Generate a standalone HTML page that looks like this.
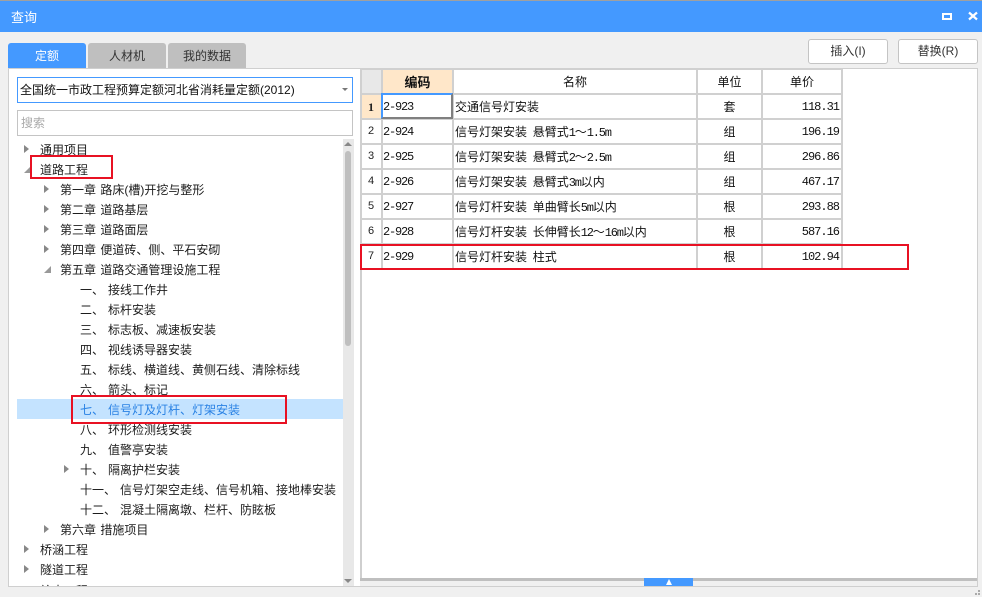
<!DOCTYPE html>
<html><head><meta charset="utf-8"><style>
html,body{margin:0;padding:0}
body{width:982px;height:597px;overflow:hidden;position:relative;background:#f0f0f0;font-family:"Liberation Sans","Noto Sans CJK SC",sans-serif;font-size:12px;color:#222}
div{position:absolute;box-sizing:border-box;white-space:nowrap}
.tab{top:43px;width:78px;height:25px;background:#bfbfbf;border-radius:3px 3px 0 0;text-align:center;line-height:26px;color:#333}
.btn{top:39px;width:80px;height:25px;background:#fff;border:1px solid #c4c4c4;border-radius:3px;text-align:center;line-height:23px;color:#333}
.t{line-height:20px;height:20px;color:#1c1c1c;margin-top:.5px;word-spacing:1px}
.ar{width:0;height:0;border-left:5px solid #888;border-top:4px solid transparent;border-bottom:4px solid transparent}
.ad{width:0;height:0;border-right:7px solid #999;border-top:7px solid transparent}
.hl{background:#c4e3ff;left:17px;top:399px;width:326px;height:20px}
.red{border:2px solid #e81123}
.vl{width:2px;background:#d0d0d0;top:69px;height:199px}
.hlne{height:2px;background:#d0d0d0;left:360px;width:482px}
.c{font-family:"Liberation Mono",monospace;font-size:12px;letter-spacing:-1.2px;line-height:27px;height:25px;color:#111}
.n{font-family:"WenQuanYi Zen Hei","Noto Sans CJK SC",sans-serif;font-size:12px;line-height:25px;height:25px;color:#111;left:455px;word-spacing:3px}
.n span{font-family:"Liberation Mono",monospace;font-size:12px;letter-spacing:-1.2px}
.u{font-family:"WenQuanYi Zen Hei","Noto Sans CJK SC",sans-serif;font-size:12px;line-height:25px;height:25px;left:698px;width:63px;text-align:center;color:#111}
.p{font-family:"Liberation Mono",monospace;font-size:12px;letter-spacing:-1px;line-height:27px;height:25px;left:762px;width:77px;text-align:right;color:#111}
.r{font-family:"Liberation Mono",monospace;font-size:11px;line-height:26px;height:25px;left:361px;width:20px;text-align:center;color:#222}
.h{font-family:"WenQuanYi Zen Hei","Noto Sans CJK SC",sans-serif;top:70px;height:23px;line-height:23px;text-align:center;color:#111}
</style></head><body>
<div style="left:0;top:0;width:982px;height:1px;background:#a0a0a0"></div>
<div style="left:0;top:1px;width:982px;height:31px;background:#4499ff"></div>
<div style="left:11px;top:8px;color:#fff;font-size:13px;line-height:20px">查询</div>
<div style="left:942px;top:13px;width:10px;height:7px;border:2px solid #fff"></div>
<svg style="position:absolute;left:967px;top:11px" width="12" height="10" viewBox="0 0 12 10"><path d="M2 1.5L10 8.5M10 1.5L2 8.5" stroke="#fff" stroke-width="2.2" fill="none"/></svg>

<div class="tab" style="left:8px;background:#4499ff;color:#fff">定额</div>
<div class="tab" style="left:88px">人材机</div>
<div class="tab" style="left:168px">我的数据</div>
<div class="btn" style="left:808px">插入(I)</div>
<div class="btn" style="left:898px">替换(R)</div>

<div style="left:8px;top:68px;width:352px;height:519px;background:#fff;border:1px solid #cfcfcf;border-right:none"></div>
<div style="left:17px;top:77px;width:336px;height:26px;background:#fff;border:1px solid #4499ff;line-height:24px;padding-left:2px;color:#111">全国统一市政工程预算定额河北省消耗量定额(2012)</div>
<div style="left:342px;top:88px;width:0;height:0;border-top:3px solid #777;border-left:3px solid transparent;border-right:3px solid transparent"></div>
<div style="left:17px;top:110px;width:336px;height:26px;background:#fff;border:1px solid #c4c4c4;line-height:24px;padding-left:3px;color:#aaa">搜索</div>

<div class="hl"></div>
<div style="left:343px;top:139px;width:11px;height:447px;background:#e8e8e8"></div>
<div style="left:345px;top:151px;width:6px;height:195px;background:#bfbfbf;border-radius:3px"></div>
<div style="left:344px;top:142px;width:0;height:0;border-bottom:4px solid #888;border-left:4px solid transparent;border-right:4px solid transparent"></div>
<div style="left:344px;top:579px;width:0;height:0;border-top:4px solid #888;border-left:4px solid transparent;border-right:4px solid transparent"></div>

<div class="ar" style="left:24px;top:145px"></div><div class="t" style="left:40px;top:139px">通用项目</div>
<div class="ad" style="left:24px;top:166px"></div><div class="t" style="left:40px;top:159px">道路工程</div>
<div class="ar" style="left:44px;top:185px"></div><div class="t" style="left:60px;top:179px">第一章 路床(槽)开挖与整形</div>
<div class="ar" style="left:44px;top:205px"></div><div class="t" style="left:60px;top:199px">第二章 道路基层</div>
<div class="ar" style="left:44px;top:225px"></div><div class="t" style="left:60px;top:219px">第三章 道路面层</div>
<div class="ar" style="left:44px;top:245px"></div><div class="t" style="left:60px;top:239px">第四章 便道砖、侧、平石安砌</div>
<div class="ad" style="left:44px;top:266px"></div><div class="t" style="left:60px;top:259px">第五章 道路交通管理设施工程</div>
<div class="t" style="left:80px;top:279px">一、</div><div class="t" style="left:108px;top:279px">接线工作井</div>
<div class="t" style="left:80px;top:299px">二、</div><div class="t" style="left:108px;top:299px">标杆安装</div>
<div class="t" style="left:80px;top:319px">三、</div><div class="t" style="left:108px;top:319px">标志板、减速板安装</div>
<div class="t" style="left:80px;top:339px">四、</div><div class="t" style="left:108px;top:339px">视线诱导器安装</div>
<div class="t" style="left:80px;top:359px">五、</div><div class="t" style="left:108px;top:359px">标线、横道线、黄侧石线、清除标线</div>
<div class="t" style="left:80px;top:379px">六、</div><div class="t" style="left:108px;top:379px">箭头、标记</div>
<div class="t" style="left:80px;top:399px;color:#2a82e4">七、</div><div class="t" style="left:108px;top:399px;color:#2a82e4">信号灯及灯杆、灯架安装</div>
<div class="t" style="left:80px;top:419px">八、</div><div class="t" style="left:108px;top:419px">环形检测线安装</div>
<div class="t" style="left:80px;top:439px">九、</div><div class="t" style="left:108px;top:439px">值警亭安装</div>
<div class="ar" style="left:64px;top:465px"></div><div class="t" style="left:80px;top:459px">十、</div><div class="t" style="left:108px;top:459px">隔离护栏安装</div>
<div class="t" style="left:80px;top:479px">十一、</div><div class="t" style="left:120px;top:479px">信号灯架空走线、信号机箱、接地棒安装</div>
<div class="t" style="left:80px;top:499px">十二、</div><div class="t" style="left:120px;top:499px">混凝土隔离墩、栏杆、防眩板</div>
<div class="ar" style="left:44px;top:525px"></div><div class="t" style="left:60px;top:519px">第六章 措施项目</div>
<div class="ar" style="left:24px;top:545px"></div><div class="t" style="left:40px;top:539px">桥涵工程</div>
<div class="ar" style="left:24px;top:565px"></div><div class="t" style="left:40px;top:559px">隧道工程</div>
<div style="left:9px;top:582px;width:334px;height:4px;overflow:hidden"><div class="t" style="left:31px;top:-1px;margin-top:0">给水工程</div></div>

<div class="red" style="left:30px;top:155px;width:83px;height:24px"></div>
<div class="red" style="left:71px;top:395px;width:216px;height:29px"></div>

<!-- right panel -->
<div style="left:360px;top:68px;width:618px;height:519px;background:#fff;border:1px solid #cfcfcf;border-left:2px solid #cfcfcf"></div>
<div style="left:362px;top:70px;width:19px;height:23px;background:#e8e8e8"></div>
<div style="left:382px;top:70px;width:70px;height:23px;background:#ffe7c9"></div>
<div style="left:362px;top:95px;width:19px;height:23px;background:#ffe7c9"></div>

<div class="vl" style="left:360px"></div><div class="vl" style="left:381px"></div><div class="vl" style="left:452px"></div><div class="vl" style="left:696px"></div><div class="vl" style="left:761px"></div><div class="vl" style="left:841px"></div>
<div class="hlne" style="top:68px"></div><div class="hlne" style="top:93px"></div><div class="hlne" style="top:118px"></div><div class="hlne" style="top:143px"></div><div class="hlne" style="top:168px"></div><div class="hlne" style="top:193px"></div><div class="hlne" style="top:218px"></div><div class="hlne" style="top:243px"></div>

<div style="left:381px;top:93px;width:72px;height:26px;border:2px solid #808080;border-top-color:#4499ff;border-left-color:#4499ff;background:#fff"></div>

<div class="h" style="left:383px;width:69px;font-weight:bold;font-size:13px">编码</div>
<div class="h" style="left:454px;width:242px">名称</div>
<div class="h" style="left:698px;width:63px">单位</div>
<div class="h" style="left:763px;width:78px">单价</div>

<div class="r" style="top:94px;font-weight:bold;font-family:'Liberation Serif',serif;font-size:12px">1</div><div class="c" style="left:383px;top:94px">2-923</div><div class="n" style="top:94px">交通信号灯安装</div><div class="u" style="top:94px">套</div><div class="p" style="top:94px">118.31</div>
<div class="r" style="top:119px">2</div><div class="c" style="left:383px;top:119px">2-924</div><div class="n" style="top:119px">信号灯架安装 悬臂式<span>1</span>～<span>1.5m</span></div><div class="u" style="top:119px">组</div><div class="p" style="top:119px">196.19</div>
<div class="r" style="top:144px">3</div><div class="c" style="left:383px;top:144px">2-925</div><div class="n" style="top:144px">信号灯架安装 悬臂式<span>2</span>～<span>2.5m</span></div><div class="u" style="top:144px">组</div><div class="p" style="top:144px">296.86</div>
<div class="r" style="top:169px">4</div><div class="c" style="left:383px;top:169px">2-926</div><div class="n" style="top:169px">信号灯架安装 悬臂式<span>3m</span>以内</div><div class="u" style="top:169px">组</div><div class="p" style="top:169px">467.17</div>
<div class="r" style="top:194px">5</div><div class="c" style="left:383px;top:194px">2-927</div><div class="n" style="top:194px">信号灯杆安装 单曲臂长<span>5m</span>以内</div><div class="u" style="top:194px">根</div><div class="p" style="top:194px">293.88</div>
<div class="r" style="top:219px">6</div><div class="c" style="left:383px;top:219px">2-928</div><div class="n" style="top:219px">信号灯杆安装 长伸臂长<span>12</span>～<span>16m</span>以内</div><div class="u" style="top:219px">根</div><div class="p" style="top:219px">587.16</div>
<div class="r" style="top:244px">7</div><div class="c" style="left:383px;top:244px">2-929</div><div class="n" style="top:244px">信号灯杆安装 柱式</div><div class="u" style="top:244px">根</div><div class="p" style="top:244px">102.94</div>

<div class="red" style="left:360px;top:244px;width:549px;height:26px"></div>

<div style="left:360px;top:581px;width:617px;height:5px;background:#f0f0f0"></div>
<div style="left:360px;top:578px;width:617px;height:3px;background:#bfbfbf"></div>
<div style="left:644px;top:578px;width:49px;height:8px;background:#4499ff"></div>
<div style="left:666px;top:579px;width:0;height:0;border-bottom:6px solid #fff;border-left:3px solid transparent;border-right:3px solid transparent"></div>
<div style="left:978px;top:590px;width:2px;height:2px;background:#aaa"></div>
<div style="left:975px;top:593px;width:2px;height:2px;background:#aaa"></div>
<div style="left:978px;top:593px;width:2px;height:2px;background:#aaa"></div>
</body></html>
